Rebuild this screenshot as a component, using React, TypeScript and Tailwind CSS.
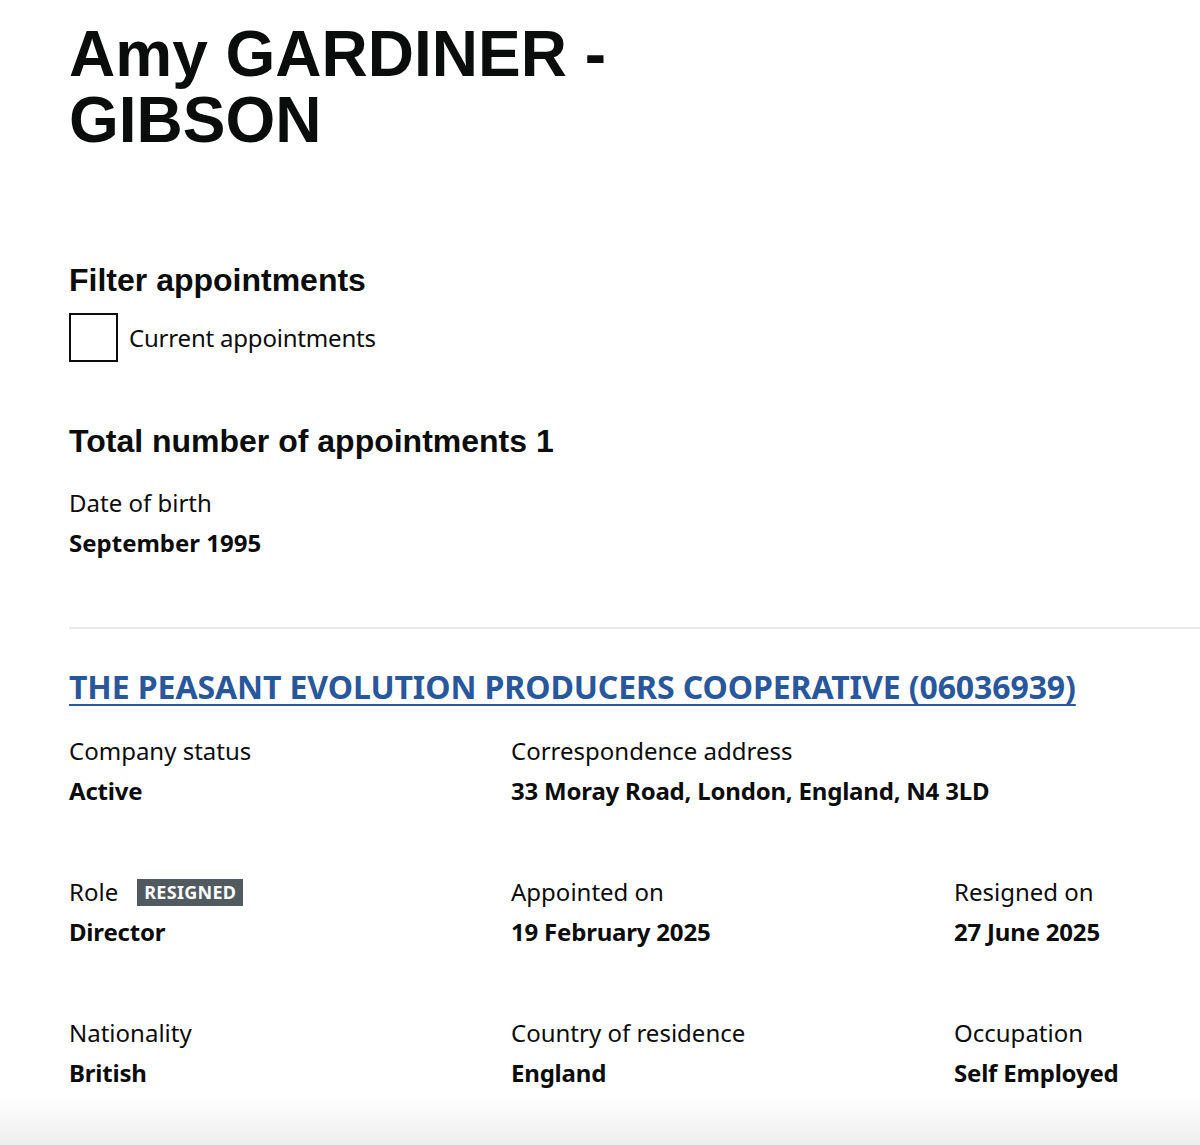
import React from 'react'

const body = { fontFamily: '"Noto Sans", "Liberation Sans", Arial, sans-serif' }
const head = { fontFamily: '"Liberation Sans", Arial, sans-serif' }

const ROWS = [
  [
    { label: 'Company status', value: 'Active' },
    { label: 'Correspondence address', value: '33 Moray Road, London, England, N4 3LD' },
  ],
  [
    { label: 'Role', value: 'Director', tag: 'Resigned' },
    { label: 'Appointed on', value: '19 February 2025' },
    { label: 'Resigned on', value: '27 June 2025' },
  ],
  [
    { label: 'Nationality', value: 'British' },
    { label: 'Country of residence', value: 'England' },
    { label: 'Occupation', value: 'Self Employed' },
  ],
]

export default function App() {
  return (
    <div className="bg-white text-[#0b0c0c] overflow-hidden" style={body}>
      <main className="pl-[69px]">
        <h1 className="pt-[21px] max-w-[700px] text-[64px] leading-[66px] font-bold" style={head}>
          Amy GARDINER - GIBSON
        </h1>

        <h2 className="mt-[107px] text-[32px] leading-[40px] font-bold" style={head}>Filter appointments</h2>
        <label className="mt-[13px] flex items-center gap-[11px] text-[24px]">
          <span className="w-[49px] h-[49px] shrink-0 border-2 border-[#0b0c0c] bg-white" />
          <span className="tracking-[-0.2px]">Current appointments</span>
        </label>

        <h2 className="mt-[59px] text-[32px] leading-[40px] font-bold" style={head}>
          Total number of appointments 1
        </h2>
        <div className="mt-[26px] text-[24px] leading-[32px]">Date of birth</div>
        <div className="mt-[8px] text-[24px] leading-[32px] font-bold">September 1995</div>

        <hr className="mt-[68px] border-0 border-t-2 border-[#e8e8e8]" />

        <a
          href="#"
          className="block mt-[38px] text-[32px] leading-[40px] font-bold text-[#28579c] underline underline-offset-[5px] decoration-[2px] tracking-[-0.1px] whitespace-nowrap"
        >
          THE PEASANT EVOLUTION PRODUCERS COOPERATIVE (06036939)
        </a>

        <div className="mt-[28px] flex flex-col gap-[69px] text-[24px] leading-[32px]">
          {ROWS.map((row, i) => (
            <div key={i} className="grid grid-cols-[442px_443px_1fr]">
              {row.map((c) => (
                <div key={c.label} className="whitespace-nowrap">
                  <div className="flex items-center gap-[19px]">
                    <span>{c.label}</span>
                    {c.tag && (
                      <span className="bg-[#505a5f] text-white font-bold uppercase text-[18px] leading-[27px] px-[7px] tracking-[0.3px]">
                        {c.tag}
                      </span>
                    )}
                  </div>
                  <div className="mt-[8px] font-bold tracking-[-0.2px]">{c.value}</div>
                </div>
              ))}
            </div>
          ))}
        </div>
      </main>
      <div className="mt-[6px] h-[60px] bg-gradient-to-b from-white to-[#ebebeb]" />
    </div>
  )
}
